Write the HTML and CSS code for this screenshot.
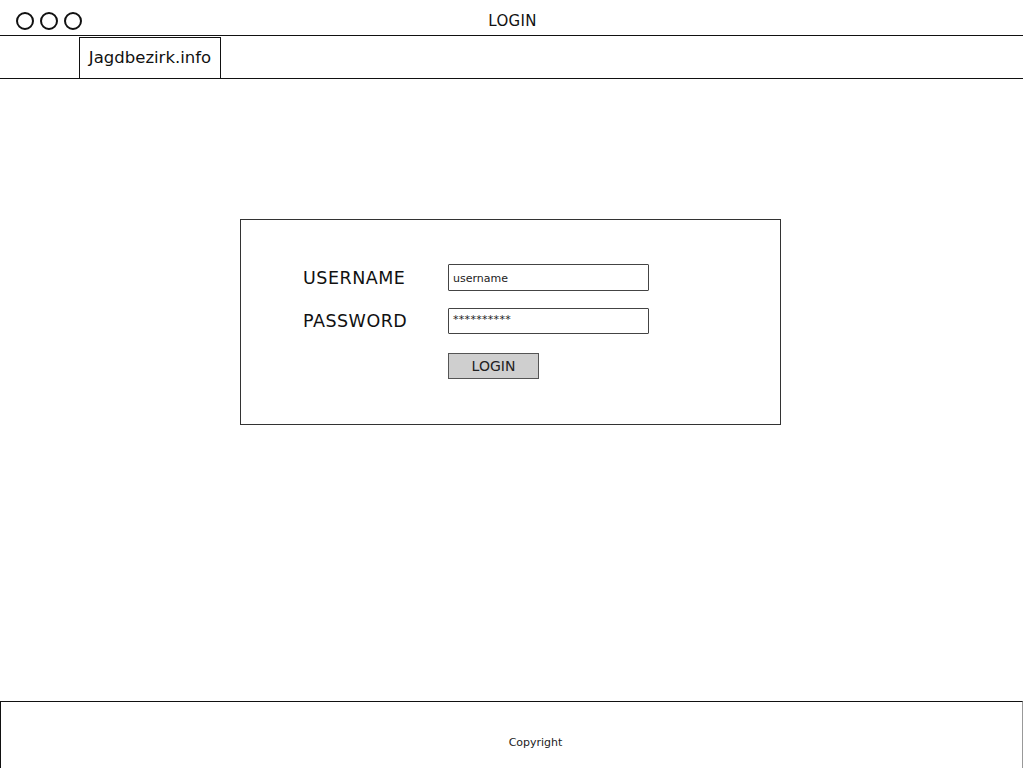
FILE: index.html
```html
<!DOCTYPE html>
<html>
<head>
<meta charset="utf-8">
<title>LOGIN</title>
<link rel="stylesheet" href="styles.css">
</head>
<body>
<div class="page">
  <header class="titlebar">
    <div class="dots">
      <span class="dot"></span><span class="dot"></span><span class="dot"></span>
    </div>
    <div class="title">LOGIN</div>
  </header>
  <nav class="tabbar">
    <div class="tab">Jagdbezirk.info</div>
  </nav>
  <main class="main">
    <form class="loginbox">
      <div class="row">
        <label class="label">USERNAME</label>
        <div class="input"><span class="placeholder">username</span></div>
      </div>
      <div class="row">
        <label class="label">PASSWORD</label>
        <div class="input pwinput"><span class="pw">**********</span></div>
      </div>
      <div class="row">
        <span class="label"></span>
        <div class="button">LOGIN</div>
      </div>
    </form>
  </main>
  <footer class="footer">
    <span class="copy">Copyright</span>
  </footer>
</div>
</body>
</html>
```
FILE: styles.css
```css
html, body {
  margin: 0;
  padding: 0;
  background: #ffffff;
}
body {
  font-family: "DejaVu Sans", "Open Sans", sans-serif;
  color: #111;
}
.page {
  width: 1024px;
  height: 768px;
  display: flex;
  flex-direction: column;
  overflow: hidden;
}
.titlebar {
  height: 36px;
  border-bottom: 1.5px solid #111;
  display: flex;
  align-items: center;
  position: relative;
  box-sizing: border-box;
  flex: none;
  margin-right: 1px;
}
.dots {
  display: flex;
  gap: 6px;
  padding-left: 16px;
  padding-top: 6px;
}
.dot {
  width: 14px;
  height: 14px;
  border: 2px solid #111;
  border-radius: 50%;
}
.title {
  position: absolute;
  left: 0;
  right: 0;
  top: 12px;
  text-align: center;
  font-size: 15px;
  letter-spacing: 0.3px;
  padding-left: 2px;
}
.tabbar {
  height: 43px;
  border-bottom: 1.5px solid #111;
  box-sizing: border-box;
  flex: none;
  padding-left: 79px;
  padding-top: 1px;
  margin-right: 1px;
}
.tab {
  width: 142px;
  height: 41px;
  box-sizing: border-box;
  border: 1px solid #111;
  border-bottom: none;
  font-size: 16.5px;
  display: flex;
  align-items: center;
  justify-content: center;
  padding-bottom: 2px;
}
.main {
  flex: 1;
  padding-top: 140px;
  padding-left: 240px;
}
.loginbox {
  width: 541px;
  height: 206px;
  box-sizing: border-box;
  border: 1px solid #333;
  padding: 44px 0 0 62px;
  display: flex;
  flex-direction: column;
  gap: 17px;
  margin: 0;
}
.row {
  display: flex;
  align-items: center;
}
.label {
  width: 145px;
  font-size: 17.5px;
  letter-spacing: 0.5px;
}
.input {
  width: 201px;
  height: 27px;
  box-sizing: border-box;
  border: 1.5px solid #444;
  border-radius: 1px;
  display: flex;
  align-items: center;
  padding-left: 4px;
  padding-top: 1px;
}
.pwinput {
  height: 26px;
  align-items: flex-start;
  padding-top: 4px;
}
.placeholder {
  font-size: 11px;
  color: #222;
}
.pw {
  font-size: 11px;
  color: #222;
  letter-spacing: 0.3px;
}
.button {
  width: 91px;
  height: 26px;
  box-sizing: border-box;
  border: 1.5px solid #555;
  background: #cfcfcf;
  display: flex;
  align-items: center;
  justify-content: center;
  font-size: 14px;
  color: #222;
  margin-top: 2px;
}
.footer {
  height: 67px;
  flex: none;
  box-sizing: border-box;
  border-top: 1.5px solid #111;
  border-left: 1px solid #111;
  border-right: 1.5px solid #999;
  margin-right: 1px;
  display: flex;
  justify-content: center;
  padding-top: 34px;
  padding-left: 48px;
}
.copy {
  font-size: 11px;
  color: #222;
}
```
